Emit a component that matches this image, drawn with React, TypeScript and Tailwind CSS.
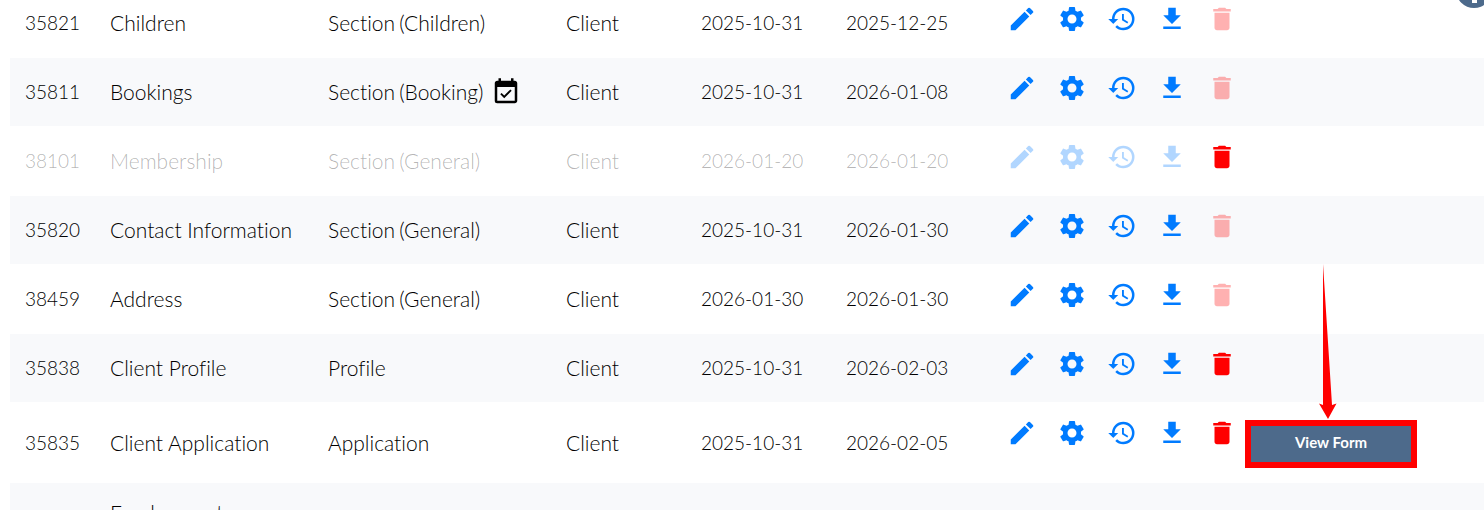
import React from 'react';
import {
  MdDelete,
  MdEdit,
  MdEventAvailable,
  MdFileDownload,
  MdHistory,
  MdSettings,
} from 'react-icons/md';

interface FormRow {
  id: number;
  name: string;
  type: string;
  section?: string;
  created?: string;
  updated?: string;
  booking?: boolean;
  disabled?: boolean;
  deletable?: boolean;
  viewable?: boolean;
}

const rows: FormRow[] = [
  { id: 35821, name: 'Children', type: 'Section', section: '(Children)', created: '2025-10-31', updated: '2025-12-25' },
  { id: 35811, name: 'Bookings', type: 'Section', section: '(Booking)', created: '2025-10-31', updated: '2026-01-08', booking: true },
  { id: 38101, name: 'Membership', type: 'Section', section: '(General)', created: '2026-01-20', updated: '2026-01-20', disabled: true, deletable: true },
  { id: 35820, name: 'Contact Information', type: 'Section', section: '(General)', created: '2025-10-31', updated: '2026-01-30' },
  { id: 38459, name: 'Address', type: 'Section', section: '(General)', created: '2026-01-30', updated: '2026-01-30' },
  { id: 35838, name: 'Client Profile', type: 'Profile', created: '2025-10-31', updated: '2026-02-03', deletable: true },
  { id: 35835, name: 'Client Application', type: 'Application', created: '2025-10-31', updated: '2026-02-05', deletable: true, viewable: true },
];

const actions = [
  { label: 'Edit', Icon: MdEdit },
  { label: 'Settings', Icon: MdSettings },
  { label: 'History', Icon: MdHistory },
  { label: 'Download', Icon: MdFileDownload },
];

function RowActions({ row }: { row: FormRow }) {
  return (
    <div className="flex gap-5">
      {actions.map(({ label, Icon }) => (
        <button
          key={label}
          type="button"
          aria-label={label}
          disabled={row.disabled}
          className="text-[#007bff] disabled:opacity-30"
        >
          <Icon size={30} />
        </button>
      ))}
      <button
        type="button"
        aria-label="Delete"
        disabled={!row.deletable}
        className="text-[#ff0000] disabled:opacity-30"
      >
        <MdDelete size={30} />
      </button>
    </div>
  );
}

function ViewFormButton() {
  return (
    <div className="relative w-40">
      <button
        type="button"
        className="block h-9 w-full bg-[#4d6a8b] pb-1 text-[15px] font-bold text-white outline-6 outline-[#ff0000]"
      >
        View Form
      </button>
      {/* Callout arrow pointing at the button */}
      <svg
        className="pointer-events-none absolute bottom-full left-16 mb-[7px]"
        width="24"
        height="155"
        viewBox="0 0 24 155"
        fill="#ff0000"
        aria-hidden="true"
      >
        <path d="M8 0 L17 141 L21.500 139.500 L13 155 L4 139.500 L8 141 Z" />
      </svg>
    </div>
  );
}

export default function App() {
  return (
    <div className="relative h-screen overflow-hidden bg-white pl-2.5 font-['Lato',sans-serif] text-[21px] leading-7 font-light text-black [font-variant-ligatures:none]">
      <table className="-mt-3 w-full table-fixed border-collapse text-left">
        <colgroup>
          <col className="w-[85px]" />
          <col className="w-[218px]" />
          <col className="w-[238px]" />
          <col className="w-[135px]" />
          <col className="w-[145px]" />
          <col className="w-[161px]" />
          <col className="w-[248px]" />
          <col />
        </colgroup>
        <tbody>
          {rows.map((row) => (
            <tr
              key={row.id}
              className={`group ${row.viewable ? 'h-[81px]' : 'h-[70px] even:h-[68px]'} even:bg-[#f8f9fb] ${row.disabled ? 'text-black/30' : ''}`}
            >
              <td className="px-[15px] text-[19px]">{row.id}</td>
              <td className="px-[15px]">{row.name}</td>
              <td className="px-[15px]">
                <div className="flex items-center gap-1">
                  <span>{row.type}</span>
                  {row.section && <span>{row.section}</span>}
                  {row.booking && <MdEventAvailable size={30} className="ml-1" aria-label="Booking" />}
                </div>
              </td>
              <td className="px-[15px]">Client</td>
              <td className="px-[15px] text-[19px]">{row.created}</td>
              <td className="px-[15px] text-[19px]">{row.updated}</td>
              <td className="px-[15px] pt-4 align-top group-even:pt-[15px]">
                <RowActions row={row} />
              </td>
              <td className="px-[11px] pt-0.5">{row.viewable && <ViewFormButton />}</td>
            </tr>
          ))}
          <tr className="h-[80px] bg-[#f8f9fb]">
            <td />
            <td className="px-[15px] pt-4 align-top">Employment</td>
            <td colSpan={6} />
          </tr>
        </tbody>
      </table>

      <button type="button" aria-label="Help" className="absolute -top-7 -right-2">
        <svg width="36" height="36" viewBox="0 0 36 36" aria-hidden="true">
          <circle cx="18" cy="18" r="18" fill="#4d6a8b" />
          <path d="M16 8h5v23h-5z" fill="#fff" />
        </svg>
      </button>
    </div>
  );
}
